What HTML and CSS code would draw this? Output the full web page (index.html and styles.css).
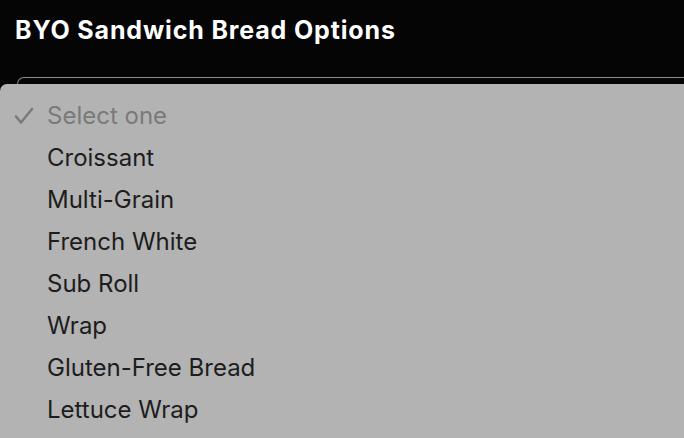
FILE: index.html
```html
<!DOCTYPE html>
<html>
<head>
<meta charset="utf-8">
<link rel="stylesheet" href="styles.css">
</head>
<body>
<div class="page">
  <h1 class="title">BYO Sandwich Bread Options</h1>
  <div class="select-box"></div>
  <ul class="menu">
    <li class="item placeholder">
      <svg class="check" width="20" height="18" viewBox="0 0 20 18"><path d="M2 9.5 L7 15.5 L18 2" fill="none" stroke="#7b7b7b" stroke-width="2.6" stroke-linecap="round" stroke-linejoin="round"/></svg>
      Select one
    </li>
    <li class="item">Croissant</li>
    <li class="item">Multi-Grain</li>
    <li class="item">French White</li>
    <li class="item">Sub Roll</li>
    <li class="item">Wrap</li>
    <li class="item">Gluten-Free Bread</li>
    <li class="item">Lettuce Wrap</li>
  </ul>
</div>
</body>
</html>
```
FILE: styles.css
```css
html, body {
  margin: 0;
  padding: 0;
  background: #050505;
  height: 100%;
  overflow: hidden;
}
.page {
  position: relative;
  width: 684px;
  height: 438px;
  overflow: hidden;
  font-family: Inter, "Liberation Sans", sans-serif;
}
.title {
  margin: 0;
  padding: 14px 0 0 15px;
  font-size: 25px;
  font-weight: 700;
  color: #ffffff;
  line-height: 32px;
  letter-spacing: 0.85px;
}
.select-box {
  margin: 31px 0 0 17px;
  height: 80px;
  border: 1px solid #8c8c8c;
  border-right: none;
  border-radius: 7px 0 0 0;
}
.menu {
  position: absolute;
  top: 84px;
  left: 0;
  width: 700px;
  height: 400px;
  margin: 0;
  padding: 11px 0 0 0;
  list-style: none;
  background: #b3b3b3;
  border-radius: 7px 0 0 0;
  box-sizing: border-box;
}
.item {
  position: relative;
  height: 42px;
  line-height: 42px;
  padding-left: 47px;
  font-size: 24px;
  color: #1d1d1d;
}
.placeholder {
  color: #7a7a7a;
}
.check {
  position: absolute;
  left: 14px;
  top: 12px;
}
```
